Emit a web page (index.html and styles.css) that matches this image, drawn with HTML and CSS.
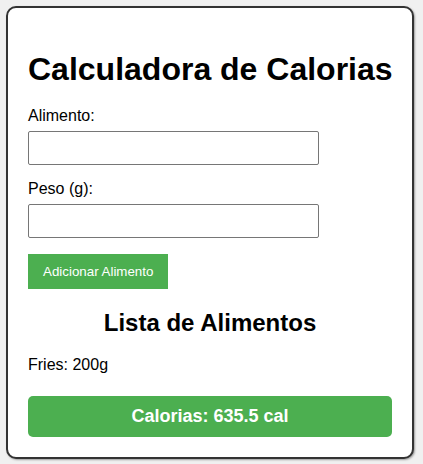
FILE: index.html
```html
<!DOCTYPE html>
<html lang="pt">
<head>
<meta charset="utf-8">
<title>Calculadora de Calorias</title>
<link rel="stylesheet" href="styles.css">
</head>
<body>
<div class="card">
  <h1 class="title">Calculadora de Calorias</h1>
  <label class="label" for="alimento">Alimento:</label>
  <input class="field" id="alimento" type="text">
  <label class="label" for="peso">Peso (g):</label>
  <input class="field" id="peso" type="number">
  <button class="add-btn" type="button">Adicionar Alimento</button>
  <h2 class="subtitle">Lista de Alimentos</h2>
  <div class="list">
    <div class="item">Fries: 200g</div>
  </div>
  <div class="total">Calorias: 635.5 cal</div>
</div>
</body>
</html>
```

FILE: styles.css
```css
html, body {
  margin: 0;
  padding: 0;
}
body {
  background: #f0f0f0;
  padding: 6px;
  font-family: "Liberation Sans", Arial, sans-serif;
  color: #000;
}
.card {
  width: 364px;
  padding: 20px;
  background: #fff;
  border: 2px solid #333;
  border-radius: 10px;
  box-shadow: 1px 1px 2px rgba(0, 0, 0, 0.35);
}
.title {
  font-size: 32px;
  font-weight: bold;
  margin: 23px 0 19px;
  line-height: normal;
  white-space: nowrap;
}
.label {
  display: block;
  font-size: 16px;
  margin-bottom: 6px;
}
.field {
  display: block;
  box-sizing: border-box;
  width: 291px;
  height: 34px;
  margin: 0 0 15px;
  padding: 6px 8px;
  border: 1px solid #767676;
  border-radius: 2px;
  font-family: "Liberation Sans", Arial, sans-serif;
  font-size: 16px;
}
.add-btn {
  display: block;
  margin-top: 16px;
  background: #4caf50;
  color: #fff;
  border: none;
  padding: 10px 15px;
  height: 35px;
  font-family: "Liberation Sans", Arial, sans-serif;
  font-size: 13.333px;
  cursor: pointer;
}
.subtitle {
  text-align: center;
  font-size: 24px;
  font-weight: bold;
  margin: 20px 0 19px;
}
.list {
  font-size: 16px;
  margin-bottom: 22px;
}
.total {
  background: #4caf50;
  color: #fff;
  font-size: 18px;
  font-weight: bold;
  text-align: center;
  padding: 10px;
  border-radius: 5px;
}
```
